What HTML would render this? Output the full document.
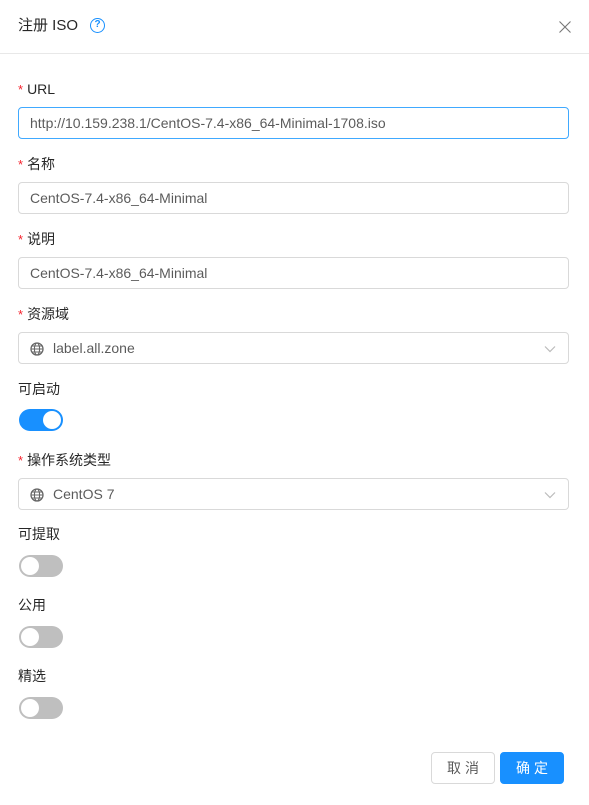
<!DOCTYPE html>
<html><head><meta charset="utf-8"><style>
*{box-sizing:border-box;margin:0;padding:0}
body{width:589px;height:805px;background:#fff;font-family:"Liberation Sans","Noto Sans CJK SC",sans-serif;color:rgba(0,0,0,.85);font-size:14px;position:relative;overflow:hidden}
.hdr{position:absolute;left:0;top:0;width:589px;height:54px;border-bottom:1px solid #e8e8e8}
.title{position:absolute;left:18px;top:15px;font-size:15px;line-height:22px;color:rgba(0,0,0,.85)}
.q{position:absolute;left:90px;top:18px;width:15px;height:15px;border:1.4px solid #1890ff;border-radius:50%;color:#1890ff;font-size:10px;font-weight:bold;text-align:center;line-height:12px}
.x{position:absolute;left:559px;top:21px}
.lbl{position:absolute;left:18px;font-size:14px;line-height:20px}
.lbl .s{color:#f5222d;font-size:13px;margin-right:4px}
.inp{position:absolute;left:18px;width:551px;height:32px;border:1px solid #d9d9d9;border-radius:4px;padding-left:11px;line-height:30px;color:rgba(0,0,0,.65);font-size:14px}
.inp.f{border-color:#40a9ff}
.g{display:inline-block;vertical-align:-3px;margin-right:9px}
.arr{position:absolute;right:12px;top:12px}
.sw{position:absolute;left:19px;width:44px;height:22px;border-radius:11px;background:#bfbfbf}
.sw.on{background:#1890ff}
.sw i{position:absolute;top:2px;left:2px;width:18px;height:18px;border-radius:50%;background:#fff}
.sw.on i{left:24px}
.btn{position:absolute;top:752px;height:32px;width:64px;border-radius:4px;text-align:center;line-height:30px;font-size:14px;letter-spacing:4px;text-indent:4px}
</style></head><body>
<div class="hdr"><div class="title">注册 ISO</div><div class="q">?</div>
<svg class="x" width="12" height="12" viewBox="0 0 12 12"><path d="M0.5 0.5L11.5 11.5M11.5 0.5L0.5 11.5" stroke="#777" stroke-width="1.1"/></svg></div>

<div class="lbl" style="top:79px"><span class="s">*</span>URL</div>
<div class="inp f" style="top:107px">http://10.159.238.1/CentOS-7.4-x86_64-Minimal-1708.iso</div>
<div class="lbl" style="top:154px"><span class="s">*</span>名称</div>
<div class="inp" style="top:182px">CentOS-7.4-x86_64-Minimal</div>
<div class="lbl" style="top:229px"><span class="s">*</span>说明</div>
<div class="inp" style="top:257px">CentOS-7.4-x86_64-Minimal</div>
<div class="lbl" style="top:304px"><span class="s">*</span>资源域</div>
<div class="inp" style="top:332px"><svg class="g" width="14" height="14" viewBox="0 0 14 14"><circle cx="7" cy="7" r="6" fill="none" stroke="#666" stroke-width="1.3"/><ellipse cx="7" cy="7" rx="2.6" ry="6" fill="none" stroke="#666" stroke-width="1.1"/><path d="M1 7H13M2 4H12M2 10H12" stroke="#666" stroke-width="1.1"/></svg>label.all.zone<svg class="arr" width="12" height="8" viewBox="0 0 12 8"><path d="M1 1.5L6 6.5L11 1.5" fill="none" stroke="#bbb" stroke-width="1.2"/></svg></div>
<div class="lbl" style="top:379px">可启动</div>
<div class="sw on" style="top:409px"><i></i></div>
<div class="lbl" style="top:450px"><span class="s">*</span>操作系统类型</div>
<div class="inp" style="top:478px"><svg class="g" width="14" height="14" viewBox="0 0 14 14"><circle cx="7" cy="7" r="6" fill="none" stroke="#666" stroke-width="1.3"/><ellipse cx="7" cy="7" rx="2.6" ry="6" fill="none" stroke="#666" stroke-width="1.1"/><path d="M1 7H13M2 4H12M2 10H12" stroke="#666" stroke-width="1.1"/></svg>CentOS 7<svg class="arr" width="12" height="8" viewBox="0 0 12 8"><path d="M1 1.5L6 6.5L11 1.5" fill="none" stroke="#bbb" stroke-width="1.2"/></svg></div>
<div class="lbl" style="top:524px">可提取</div>
<div class="sw" style="top:555px"><i></i></div>
<div class="lbl" style="top:595px">公用</div>
<div class="sw" style="top:626px"><i></i></div>
<div class="lbl" style="top:666px">精选</div>
<div class="sw" style="top:697px"><i></i></div>

<div class="btn" style="left:431px;border:1px solid #d9d9d9;color:rgba(0,0,0,.65)">取消</div>
<div class="btn" style="left:500px;background:#1890ff;color:#fff;border:1px solid #1890ff">确定</div>
</body></html>
